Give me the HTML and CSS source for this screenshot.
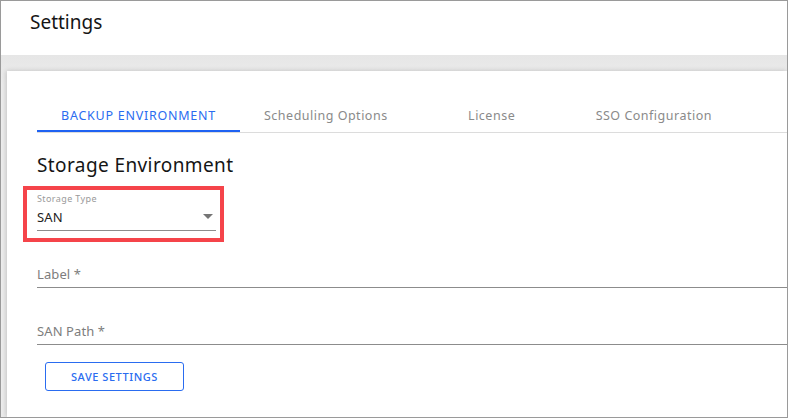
FILE: index.html
```html
<!DOCTYPE html>
<html lang="en">
<head>
<meta charset="utf-8">
<title>Settings</title>
<link rel="stylesheet" href="styles.css">
</head>
<body>
<div class="frame">
  <header class="page-header">
    <h1 class="page-title">Settings</h1>
  </header>
  <main class="content">
    <section class="card">
      <nav class="tabs">
        <div class="tab active">BACKUP ENVIRONMENT</div>
        <div class="tab">Scheduling Options</div>
        <div class="tab">License</div>
        <div class="tab">SSO Configuration</div>
      </nav>
      <h2 class="section-title">Storage Environment</h2>
      <div class="field select-field highlighted">
        <div class="field-label">Storage Type</div>
        <div class="field-row">
          <span class="field-value">SAN</span>
          <span class="caret"></span>
        </div>
      </div>
      <div class="field text-field">
        <div class="field-row"><span class="placeholder">Label *</span></div>
      </div>
      <div class="field text-field">
        <div class="field-row"><span class="placeholder">SAN Path *</span></div>
      </div>
      <button class="btn-outline">SAVE SETTINGS</button>
    </section>
  </main>
</div>
</body>
</html>
```

FILE: styles.css
```css
* { box-sizing: border-box; }
html, body { margin: 0; padding: 0; background: #fff; }
body { font-family: "Noto Sans", "Open Sans", sans-serif; }

.frame {
  width: 788px;
  height: 418px;
  border: 1px solid #9a9a9a;
  background: #ebebeb;
  display: flex;
  flex-direction: column;
  overflow: hidden;
}

.page-header {
  height: 54px;
  background: #fff;
  padding: 8px 0 0 29px;
  flex: none;
}
.page-title {
  margin: 0;
  font-size: 19px;
  font-weight: 400;
  line-height: 26px;
  color: #151515;
}

.content {
  flex: 1;
  display: flex;
  padding: 16px 0 0 6px;
  background: linear-gradient(#e6e6e6, #ededed 30px);
  min-height: 0;
}

.card {
  flex: 1;
  background: #fff;
  box-shadow: -1px 0 5px rgba(0,0,0,0.18);
  padding: 27px 0 0 30px;
  display: flex;
  flex-direction: column;
  align-items: flex-start;
}

.tabs {
  display: flex;
  align-self: stretch;
  border-bottom: 1px solid #dcdcdc;
}
.tab {
  min-width: 160px;
  height: 34px;
  padding: 2px 24px 0;
  display: flex;
  align-items: center;
  justify-content: center;
  font-size: 12.5px;
  color: #8a8a8a;
  letter-spacing: 0.5px;
  border-bottom: 2px solid transparent;
  white-space: nowrap;
}
.tab.active {
  color: #2a6cf0;
  border-bottom-color: #1f62f2;
  width: 203px;
  letter-spacing: 0.75px;
}

.section-title {
  margin: 20px 0 0;
  font-size: 19px;
  font-weight: 400;
  line-height: 24px;
  letter-spacing: 0.4px;
  color: #151515;
}

.field { position: relative; }
.select-field {
  width: 179px;
  margin-top: 16px;
}
.highlighted::after {
  content: "";
  position: absolute;
  left: -14px;
  right: -8px;
  top: -7px;
  bottom: -11px;
  border: 4px solid #f5444a;
  pointer-events: none;
}
.field-label {
  font-size: 9px;
  line-height: 11px;
  color: #9a9a9a;
  letter-spacing: 0.4px;
}
.field-row {
  height: 27px;
  display: flex;
  align-items: center;
  border-bottom: 1px solid #8c8c8c;
  padding-bottom: 1px;
}
.field-value {
  font-size: 13px;
  color: #222;
  flex: 1;
  letter-spacing: 0.2px;
}
.caret {
  width: 0;
  height: 0;
  border-left: 5px solid transparent;
  border-right: 5px solid transparent;
  border-top: 5px solid #757575;
  margin-right: 3px;
}
.text-field {
  align-self: stretch;
  margin-top: 30px;
}
.placeholder {
  font-size: 13px;
  color: #7d7d7d;
  letter-spacing: 0.1px;
}

.btn-outline {
  margin: 17px 0 0 8px;
  width: 139px;
  height: 29px;
  border: 1px solid #2a6cf0;
  border-radius: 3px;
  background: #fff;
  color: #2a6cf0;
  font-family: inherit;
  font-size: 11px;
  font-weight: 500;
  letter-spacing: 0.55px;
  padding: 0;
}
```
